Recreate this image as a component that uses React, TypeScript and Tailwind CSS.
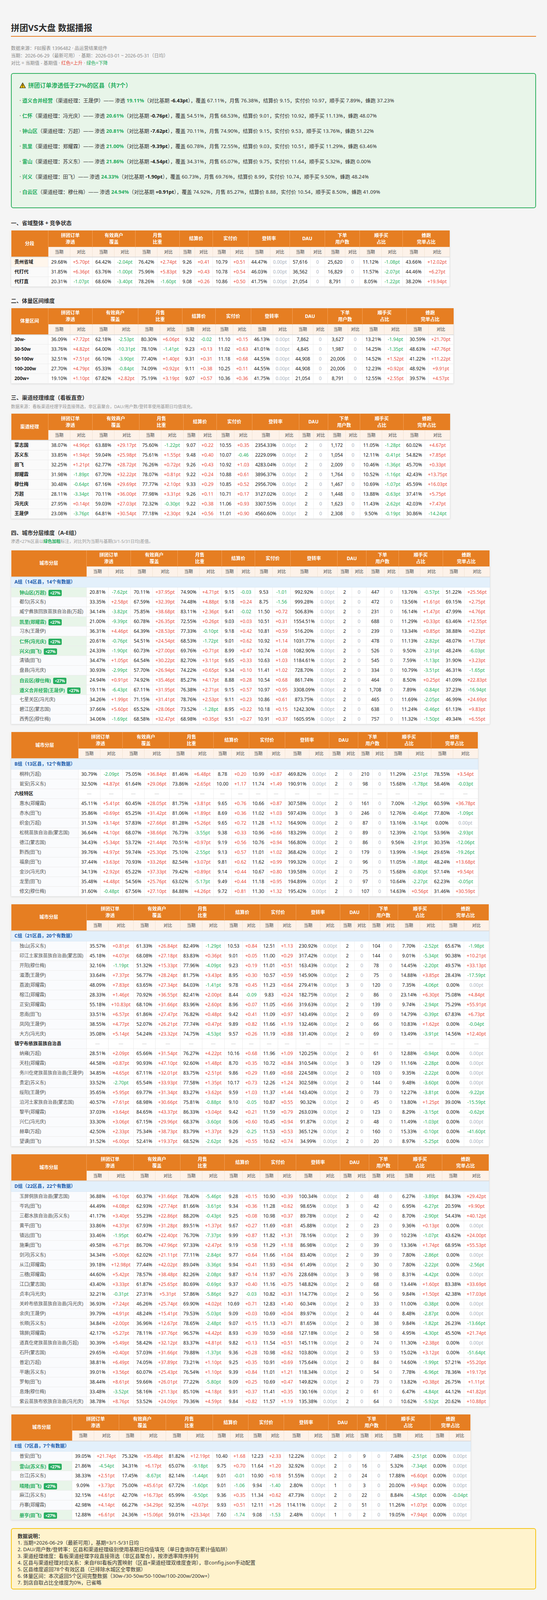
import React from 'react';

const GROUPS: string[][] = [
  ['拼团订单', '渗透'],
  ['有效商户', '覆盖'],
  ['月售', '比重'],
  ['结算价'],
  ['实付价'],
  ['登转率'],
  ['DAU'],
  ['下单', '用户数'],
  ['顺手买', '占比'],
  ['蜂跑', '完单占比'],
];

type Row = { name: string; hl: boolean; vals: string[] };

function parse(src: string): Row[] {
  return src
    .trim()
    .split('\n')
    .map((line) => {
      const parts = line.trim().split(/\s+/);
      const raw = parts[0];
      return { name: raw.replace(/^!/, ''), hl: raw.startsWith('!'), vals: parts.slice(1) };
    });
}

const PROVINCE = parse(`
贵州省域 29.68% +5.70pt 64.42% -2.04pt 76.42% +2.74pt 9.26 +0.41 10.79 +0.51 44.47% 0.00pt 57,616 0 25,620 0 11.12% -1.08pt 43.66% +12.02pt
代打代 31.85% +6.36pt 63.76% -1.00pt 75.96% +5.83pt 9.29 +0.43 10.78 +0.54 46.03% 0.00pt 36,562 0 16,829 0 11.57% -2.07pt 44.46% +6.27pt
代打直 20.31% -1.07pt 68.60% -3.40pt 78.26% -1.60pt 9.08 +0.26 10.86 +0.50 41.75% 0.00pt 21,054 0 8,791 0 8.05% -1.22pt 38.20% +19.94pt
`);

const VOLUME = parse(`
30w- 36.09% +7.72pt 62.18% -2.53pt 80.30% +6.06pt 9.32 -0.02 11.10 +0.15 46.13% 0.00pt 7,862 0 3,627 0 13.21% -1.94pt 30.59% +21.70pt
30-50w 33.76% +4.82pt 64.00% -10.31pt 78.10% -1.41pt 9.23 +0.13 11.02 +0.63 41.01% 0.00pt 4,845 0 1,987 0 14.25% -1.35pt 48.63% +47.76pt
50-100w 32.51% +7.51pt 66.10% -3.90pt 77.40% +1.40pt 9.31 +0.31 11.18 +0.68 44.55% 0.00pt 44,908 0 20,006 0 14.52% +1.52pt 41.22% +11.22pt
100-200w 27.70% +4.79pt 65.33% -0.84pt 74.09% +0.92pt 9.11 +0.38 10.25 +0.11 44.55% 0.00pt 44,908 0 20,006 0 12.23% +0.92pt 48.92% +9.91pt
200w+ 19.10% +1.10pt 67.82% +2.82pt 75.19% +3.19pt 9.07 +0.57 10.36 +0.36 41.75% 0.00pt 21,054 0 8,791 0 12.55% +2.55pt 39.57% +4.57pt
`);

const MANAGERS = parse(`
蒙志国 38.07% +4.96pt 63.88% +29.17pt 75.60% -1.22pt 9.07 +0.22 10.55 +0.35 2354.33% 0.00pt 2 0 1,172 0 11.05% -1.28pt 60.02% +4.67pt
苏义东 33.85% +1.94pt 59.04% +25.98pt 75.61% +1.55pt 9.48 +0.40 10.07 -0.46 2229.09% 0.00pt 2 0 1,054 0 12.11% -0.41pt 54.82% +7.85pt
田飞 32.25% +1.21pt 62.77% +28.72pt 76.26% +0.72pt 9.26 +0.43 10.92 +1.03 4283.04% 0.00pt 2 0 2,009 0 10.46% -1.36pt 45.70% +0.33pt
郑耀霖 31.98% -1.89pt 67.70% +32.22pt 78.07% +0.81pt 9.22 +0.24 10.88 +0.61 3896.37% 0.00pt 2 0 1,764 0 10.52% -1.16pt 42.43% +13.75pt
穆仕梅 30.48% -0.64pt 67.16% +29.69pt 77.77% +2.10pt 9.33 +0.29 10.85 +0.52 2956.70% 0.00pt 2 0 1,467 0 10.69% -1.07pt 45.59% +16.03pt
万超 28.11% -3.34pt 70.11% +36.00pt 77.98% +3.31pt 9.26 +0.11 10.71 +0.17 3127.02% 0.00pt 2 0 1,448 0 13.88% -0.63pt 37.41% +5.75pt
冯光庆 27.95% +0.14pt 59.03% +27.03pt 72.32% -0.30pt 9.22 +0.38 11.06 +0.93 3307.55% 0.00pt 2 0 1,623 0 11.43% -2.62pt 42.03% +7.47pt
王晟伊 23.08% -3.76pt 64.81% +30.54pt 77.18% +2.30pt 9.24 +0.56 11.01 +0.90 4560.60% 0.00pt 2 0 2,308 0 9.50% -0.19pt 30.86% -14.24pt
`);

const GROUP_A = parse(`
!钟山区(万超) 20.81% -7.62pt 70.11% +37.95pt 74.90% +4.71pt 9.15 -0.03 9.53 -1.01 992.92% 0.00pt 2 0 447 0 13.76% -0.57pt 51.22% +25.56pt
都匀(苏义东) 33.35% +2.58pt 67.59% +32.39pt 74.48% +4.88pt 9.18 +0.24 8.75 -1.56 999.28% 0.00pt 2 0 472 0 13.56% +1.61pt 69.15% +2.75pt
威宁彝族回族苗族自治县(万超) 34.14% -3.82pt 75.85% +38.68pt 83.11% +2.36pt 9.41 -0.02 11.50 +0.72 506.83% 0.00pt 2 0 231 0 16.14% +1.47pt 47.99% +4.76pt
!凯里(郑耀霖) 21.00% -9.39pt 60.78% +26.35pt 72.55% +0.26pt 9.03 +0.03 10.51 +0.31 1554.51% 0.00pt 2 0 688 0 11.29% +0.33pt 63.46% +12.55pt
习水(王晟伊) 36.31% +4.46pt 64.39% +28.53pt 77.33% -0.10pt 9.18 +0.42 10.81 +0.59 516.20% 0.00pt 2 0 239 0 13.34% +0.85pt 38.88% +0.23pt
!仁怀(冯光庆) 20.61% -0.76pt 54.51% +24.54pt 68.53% -1.72pt 9.01 +0.62 10.92 +1.14 1031.77% 0.00pt 2 0 478 0 11.13% -2.82pt 48.07% +1.73pt
!兴义(田飞) 24.33% -1.90pt 60.73% +27.00pt 69.76% +0.71pt 8.99 +0.47 10.74 +1.08 1082.90% 0.00pt 2 0 526 0 9.50% -2.31pt 48.24% -6.03pt
清镇(田飞) 34.47% +1.05pt 64.54% +30.22pt 82.70% +3.11pt 9.65 +0.33 10.63 +1.03 1184.61% 0.00pt 2 0 545 0 7.59% -1.13pt 31.90% +3.23pt
盘县(冯光庆) 30.93% -2.99pt 57.70% +26.94pt 74.22% +0.65pt 9.34 +0.10 11.41 +1.02 728.70% 0.00pt 2 0 334 0 10.79% -3.51pt 46.31% -1.65pt
!白云区(穆仕梅) 24.94% +0.91pt 74.92% +35.46pt 85.27% +4.17pt 8.88 +0.28 10.54 +0.68 861.74% 0.00pt 2 0 464 0 8.50% +0.25pt 41.09% +22.83pt
!遵义合并经营(王晟伊) 19.11% -6.43pt 67.11% +31.95pt 76.38% +2.71pt 9.15 +0.57 10.97 +0.95 3308.09% 0.00pt 2 0 1,708 0 7.89% -0.84pt 37.23% -16.94pt
七星关区(冯光庆) 34.26% +1.99pt 71.15% +31.41pt 78.76% +2.53pt 9.11 +0.23 10.86 +0.61 873.75% 0.00pt 2 0 465 0 11.69% -2.05pt 46.99% +24.69pt
碧江区(蒙志国) 37.66% +5.60pt 65.52% +28.06pt 73.52% -1.28pt 8.95 +0.22 10.18 +0.15 1242.30% 0.00pt 2 0 638 0 11.24% -0.46pt 61.13% +9.83pt
西秀区(穆仕梅) 34.06% -1.69pt 68.58% +32.47pt 68.98% +0.35pt 9.51 +0.27 10.91 +0.37 1605.95% 0.00pt 2 0 757 0 11.32% -1.50pt 49.34% +6.55pt
`);

const GROUP_B = parse(`
桐梓(万超) 30.79% -2.09pt 75.05% +36.84pt 81.46% +6.48pt 8.78 +0.20 10.99 +0.87 469.82% 0.00pt 2 0 210 0 11.29% -2.51pt 78.55% +3.54pt
瓮安(苏义东) 32.50% +4.87pt 61.64% +29.06pt 73.86% +2.65pt 10.00 +1.17 11.74 +1.49 190.91% 0.00pt 2 0 98 0 15.68% -1.78pt 58.46% -0.03pt
六枝特区
惠水(郑耀霖) 45.11% +5.41pt 60.45% +28.05pt 81.75% +3.81pt 9.65 +0.76 10.66 +0.87 307.58% 0.00pt 2 0 161 0 7.00% -1.29pt 60.59% +36.78pt
赤水(田飞) 35.86% +0.69pt 65.25% +31.42pt 81.06% +1.89pt 8.69 +0.36 11.02 +1.03 597.43% 0.00pt 3 0 246 0 12.76% -0.46pt 77.80% -1.09pt
织金(万超) 31.53% +3.14pt 57.83% +27.66pt 81.28% +5.26pt 9.65 +0.72 11.28 +1.12 164.90% 0.00pt 2 0 87 0 13.16% -3.14pt 0.00% 0.00pt
松桃苗族自治县(蒙志国) 36.64% +4.10pt 68.07% +38.66pt 76.73% -3.55pt 9.38 +0.33 10.96 +0.66 183.29% 0.00pt 2 0 89 0 12.39% -2.10pt 53.96% -2.93pt
德江(蒙志国) 34.43% +5.34pt 53.72% +21.44pt 70.51% +0.97pt 9.19 +0.56 10.76 +0.94 166.80% 0.00pt 2 0 86 0 9.56% -2.91pt 30.35% -12.06pt
黔西(田飞) 39.76% +4.97pt 59.74% +25.30pt 75.10% -2.55pt 9.13 +0.57 11.01 +1.02 368.42% 0.00pt 2 0 179 0 13.99% -1.94pt 29.65% -19.26pt
福泉(田飞) 37.44% +3.63pt 70.93% +33.26pt 82.54% +3.07pt 9.81 +0.62 11.62 +0.99 199.32% 0.00pt 2 0 96 0 11.05% -1.88pt 48.24% +13.68pt
金沙(冯光庆) 34.13% +2.92pt 65.22% +37.33pt 79.42% +0.89pt 9.14 +0.44 10.67 +0.80 139.58% 0.00pt 2 0 75 0 15.68% -0.80pt 57.14% +9.54pt
龙里(田飞) 35.48% +4.48pt 54.56% +25.76pt 63.02% -5.17pt 9.49 +0.44 11.18 +0.95 194.89% 0.00pt 2 0 97 0 10.64% -2.27pt 62.23% -0.05pt
修文(穆仕梅) 31.60% -0.48pt 67.56% +27.10pt 84.88% +4.26pt 9.72 +0.81 11.30 +1.32 195.42% 0.00pt 2 0 107 0 14.63% +0.56pt 31.46% +30.59pt
`);

const GROUP_C = parse(`
独山(苏义东) 35.57% +0.81pt 61.33% +26.84pt 82.49% -1.29pt 10.53 +0.84 12.51 +1.13 230.92% 0.00pt 2 0 104 0 7.70% -2.52pt 65.67% -1.98pt
印江土家族苗族自治县(蒙志国) 45.18% +4.07pt 68.08% +27.18pt 83.83% +0.36pt 9.01 +0.05 11.00 +0.29 317.42% 0.00pt 2 0 144 0 9.01% -5.34pt 90.38% +10.21pt
开阳(穆仕梅) 32.16% -1.19pt 51.32% +15.33pt 77.96% -4.09pt 9.23 +0.19 11.01 +0.51 163.43% 0.00pt 2 0 78 0 14.45% -2.20pt 49.57% +33.13pt
湄潭(王晟伊) 33.64% +7.37pt 56.77% +28.24pt 81.75% +3.43pt 8.95 +0.30 10.57 +0.59 145.90% 0.00pt 2 0 75 0 14.88% +3.85pt 28.43% -17.59pt
荔波(郑耀霖) 48.09% +7.83pt 63.65% +27.34pt 84.03% -1.41pt 9.78 +0.45 11.23 +0.64 279.41% 0.00pt 3 0 120 0 7.35% -4.06pt 0.00% 0.00pt
榕江(郑耀霖) 28.33% +1.46pt 70.92% +36.55pt 82.41% +2.00pt 8.44 -0.09 9.83 +0.24 182.75% 0.00pt 2 0 86 0 23.14% +6.30pt 75.08% +4.84pt
正安(郑耀霖) 55.18% +10.83pt 68.10% +31.66pt 83.96% +2.60pt 8.96 +0.07 11.05 +0.66 319.63% 0.00pt 2 0 139 0 9.74% -2.94pt 75.29% +55.91pt
思南(田飞) 33.51% +6.57pt 61.86% +27.47pt 76.82% +0.48pt 9.42 +0.41 11.09 +0.97 143.49% 0.00pt 2 0 69 0 14.79% -0.39pt 67.83% +6.73pt
凤冈(王晟伊) 38.55% +4.77pt 52.07% +26.21pt 77.74% +0.47pt 9.89 +0.82 11.66 +1.19 132.46% 0.00pt 2 0 66 0 10.83% +1.62pt 0.00% -0.04pt
大方(冯光庆) 35.08% +5.14pt 54.24% +23.32pt 74.75% -4.53pt 9.57 +0.26 11.19 +0.88 131.40% 0.00pt 2 0 69 0 13.49% -3.91pt 14.56% +12.40pt
镇宁布依族苗族自治县
纳雍(万超) 28.51% +2.09pt 65.66% +31.54pt 76.27% +4.22pt 10.16 +0.68 11.96 +1.09 120.25% 0.00pt 2 0 61 0 12.88% -0.94pt 0.00% 0.00pt
天柱(郑耀霖) 44.58% +0.87pt 90.93% +47.10pt 92.60% +1.48pt 8.70 +0.35 10.72 +0.84 310.54% 0.00pt 3 0 129 0 11.16% -2.28pt 0.00% 0.00pt
务川仡佬族苗族自治县(王晟伊) 34.85% +4.65pt 67.11% +32.01pt 83.75% +2.51pt 9.86 +0.29 11.69 +0.68 224.58% 0.00pt 2 0 103 0 9.35% -2.22pt 0.00% 0.00pt
贵定(苏义东) 33.52% -2.70pt 65.54% +33.93pt 77.58% +1.35pt 10.17 +0.73 12.26 +1.24 302.58% 0.00pt 2 0 144 0 9.48% -3.60pt 0.00% 0.00pt
绥阳(王晟伊) 35.65% +5.95pt 69.77% +31.34pt 83.27% +3.62pt 9.59 +1.03 11.37 +1.44 143.40% 0.00pt 2 0 73 0 12.27% -3.81pt 0.00% -9.22pt
沿河土家族自治县(蒙志国) 40.57% +7.61pt 68.98% +30.66pt 75.81% -0.88pt 9.10 -0.05 10.87 +0.55 90.32% 0.00pt 2 0 45 0 13.80% +1.25pt 39.00% -15.59pt
黎平(郑耀霖) 37.03% +3.64pt 84.65% +43.37pt 86.33% +3.04pt 9.42 +0.21 11.59 +0.79 263.03% 0.00pt 2 0 123 0 8.29% -3.15pt 0.00% -0.62pt
兴仁(冯光庆) 33.30% +3.06pt 67.15% +29.96pt 68.37% -3.60pt 9.06 +0.60 10.45 +0.94 91.87% 0.00pt 2 0 48 0 11.49% -1.03pt 0.00% 0.00pt
赫章(万超) 42.50% +2.33pt 75.34% +38.73pt 83.79% +1.37pt 9.29 -0.25 11.53 +0.53 365.12% 0.00pt 2 0 160 0 15.33% -0.10pt 0.00% -41.60pt
望谟(田飞) 31.52% +6.00pt 52.41% +19.37pt 68.52% -2.62pt 9.26 +0.55 10.62 +0.74 34.99% 0.00pt 2 0 20 0 8.97% -5.25pt 0.00% 0.00pt
`);

const GROUP_D = parse(`
玉屏侗族自治县(蒙志国) 36.88% +6.10pt 60.37% +31.66pt 78.40% -5.46pt 9.28 +0.15 10.90 +0.39 100.34% 0.00pt 2 0 48 0 6.27% -3.89pt 84.33% +29.42pt
岑巩(田飞) 44.49% +4.08pt 62.93% +27.74pt 81.66% -3.61pt 9.34 +0.36 11.28 +0.62 98.65% 0.00pt 3 0 42 0 6.95% -6.27pt 20.59% +9.90pt
三都水族自治县(苏义东) 41.17% +3.40pt 55.23% +22.86pt 88.20% -0.43pt 9.25 +0.08 10.98 +0.37 89.78% 0.00pt 2 0 42 0 8.70% -2.90pt 54.43% +40.12pt
黄平(田飞) 33.86% +4.37pt 67.93% +31.28pt 89.51% +1.37pt 9.67 +0.27 11.69 +0.81 45.88% 0.00pt 2 0 23 0 9.36% +0.13pt 0.00% 0.00pt
镇远(田飞) 33.46% -1.95pt 60.47% +22.40pt 76.70% -7.37pt 9.99 +0.87 11.82 +1.31 78.16% 0.00pt 2 0 39 0 10.23% -1.07pt 43.62% +24.00pt
施秉(田飞) 49.58% +6.71pt 86.70% +47.96pt 97.33% +2.47pt 9.19 +0.58 11.29 +1.18 86.98% 0.00pt 2 0 39 0 13.36% +1.74pt 68.95% +55.53pt
剑河(苏义东) 34.34% +5.00pt 62.02% +21.11pt 77.11% -2.84pt 9.77 +0.64 11.66 +1.04 83.40% 0.00pt 2 0 39 0 7.80% -2.86pt 0.00% 0.00pt
从江(郑耀霖) 39.18% +12.98pt 77.44% +42.02pt 89.04% -3.36pt 9.94 +0.41 11.93 +0.94 61.49% 0.00pt 2 0 30 0 7.80% -2.22pt 0.00% -2.56pt
三穗(郑耀霖) 44.60% +5.42pt 78.57% +38.48pt 82.26% -2.08pt 9.87 +0.14 11.97 +0.76 228.68% 0.00pt 3 0 98 0 8.31% -4.42pt 0.00% 0.00pt
江口(蒙志国) 43.40% +3.33pt 61.87% +25.65pt 80.69% -0.69pt 9.37 +0.40 11.16 +0.75 148.82% 0.00pt 2 0 68 0 13.44% +1.60pt 83.38% +33.69pt
贞丰(冯光庆) 32.21% -0.31pt 27.31% +5.31pt 57.86% -5.86pt 9.27 -0.03 10.82 +0.31 114.77% 0.00pt 2 0 56 0 9.84% +1.50pt 42.38% +17.03pt
关岭布依族苗族自治县(冯光庆) 36.93% +7.24pt 46.26% +25.74pt 69.90% +4.02pt 10.69 +0.71 12.83 +1.40 60.34% 0.00pt 2 0 33 0 11.00% -0.38pt 0.00% 0.00pt
余庆(王晟伊) 39.79% +4.91pt 48.24% +15.41pt 79.53% -5.03pt 9.09 +0.03 10.69 +0.04 89.97% 0.00pt 2 0 44 0 8.48% -2.87pt 0.00% 0.00pt
长顺(苏义东) 34.84% +2.00pt 36.96% +12.67pt 78.65% -2.48pt 9.07 +0.15 11.13 +0.71 81.65% 0.00pt 2 0 38 0 9.84% -1.82pt 26.23% -13.66pt
锦屏(郑耀霖) 42.17% +5.27pt 78.11% +37.76pt 96.57% +4.42pt 8.93 +0.39 10.59 +0.68 127.18% 0.00pt 2 0 58 0 4.95% -4.30pt 45.50% +21.74pt
道真仡佬族苗族自治县(万超) 30.39% +5.49pt 58.42% +32.12pt 83.37% +4.81pt 9.82 +0.13 11.54 +0.51 145.11% 0.00pt 2 0 74 0 11.30% +2.38pt 0.00% 0.00pt
石阡(蒙志国) 29.65% +0.40pt 57.03% +31.66pt 79.88% -1.37pt 9.36 +0.28 10.98 +0.62 103.80% 0.00pt 2 0 53 0 15.02% +3.12pt 0.00% -51.64pt
普定(万超) 38.81% +6.49pt 74.05% +37.89pt 73.21% +1.10pt 9.25 +0.35 10.91 +0.69 175.64% 0.00pt 2 0 84 0 14.60% -1.99pt 57.21% +55.20pt
平塘(苏义东) 39.01% +3.56pt 60.07% +25.43pt 76.54% +1.10pt 9.39 +0.84 11.01 +1.21 118.34% 0.00pt 2 0 54 0 7.78% -6.96pt 78.36% +19.17pt
罗甸(田飞) 38.44% +8.61pt 59.66% +26.01pt 77.22% -5.80pt 9.09 +0.25 10.69 +0.47 149.82% 0.00pt 2 0 73 0 13.82% +0.38pt 26.75% +1.11pt
息烽(穆仕梅) 33.48% -3.52pt 58.16% +21.13pt 85.10% +4.18pt 9.91 +0.37 11.41 +0.35 130.16% 0.00pt 2 0 61 0 6.47% -4.84pt 44.12% +41.82pt
紫云苗族布依族自治县(冯光庆) 38.78% +8.76pt 53.52% +24.09pt 79.36% +4.59pt 9.84 +0.82 11.57 +1.19 135.38% 0.00pt 2 0 64 0 10.62% -5.92pt 20.62% +10.88pt
`);

const GROUP_E = parse(`
普安(田飞) 39.05% +21.74pt 75.32% +35.48pt 81.82% +12.19pt 10.40 +1.68 12.23 +2.33 12.22% 0.00pt 2 0 9 0 7.48% -2.51pt 0.00% 0.00pt
!雷山(苏义东) 21.86% -4.54pt 34.31% +6.17pt 65.07% -9.18pt 9.75 +0.70 11.64 +1.20 32.92% 0.00pt 2 0 16 0 5.32% -7.34pt 0.00% 0.00pt
台江(苏义东) 38.33% +2.51pt 17.45% -8.67pt 82.14% -1.44pt 9.01 -0.01 10.90 +0.18 51.55% 0.00pt 2 0 24 0 17.88% +6.60pt 0.00% 0.00pt
!晴隆(田飞) 9.09% +3.73pt 75.00% +45.61pt 67.72% -1.60pt 9.01 -1.06 9.94 -1.40 2.80% 0.00pt 1 0 3 0 20.00% +9.94pt 0.00% 0.00pt
麻江(苏义东) 32.15% +4.61pt 42.70% +16.73pt 65.99% -9.50pt 9.36 +0.35 11.34 +0.62 47.73% 0.00pt 2 0 22 0 8.84% -4.58pt 0.00% -0.04pt
丹寨(郑耀霖) 42.98% +4.14pt 66.27% +34.29pt 92.35% +4.07pt 9.93 +0.51 12.11 +1.26 114.11% 0.00pt 2 0 51 0 11.26% +1.07pt 0.00% 0.00pt
!册亨(田飞) 12.88% +6.61pt 24.36% +15.06pt 59.01% +23.34pt 7.60 -1.74 9.08 -1.53 2.48% 0.00pt 1 0 2 0 19.05% +7.94pt 0.00% 0.00pt
`);

const CITY_TABLES = [
  { title: 'A组（14区县，14个有数据）', rows: GROUP_A, firstW: 'w-[193px]' },
  { title: 'B组（13区县，12个有数据）', rows: GROUP_B, firstW: 'w-[172px]' },
  { title: 'C组（21区县，20个有数据）', rows: GROUP_C, firstW: 'w-[193px]' },
  { title: 'D组（22区县，22个有数据）', rows: GROUP_D, firstW: 'w-[193px]' },
  { title: 'E组（7区县，7个有数据）', rows: GROUP_E, firstW: 'w-[156px]' },
];

const ALERTS = [
  ['遵义合并经营', '王晟伊', '19.11%', '-6.43pt', '67.11%', '76.38%', '9.15', '10.97', '7.89%', '37.23%'],
  ['仁怀', '冯光庆', '20.61%', '-0.76pt', '54.51%', '68.53%', '9.01', '10.92', '11.13%', '48.07%'],
  ['钟山区', '万超', '20.81%', '-7.62pt', '70.11%', '74.90%', '9.15', '9.53', '13.76%', '51.22%'],
  ['凯里', '郑耀霖', '21.00%', '-9.39pt', '60.78%', '72.55%', '9.03', '10.51', '11.29%', '63.46%'],
  ['雷山', '苏义东', '21.86%', '-4.54pt', '34.31%', '65.07%', '9.75', '11.64', '5.32%', '0.00%'],
  ['兴义', '田飞', '24.33%', '-1.90pt', '60.73%', '69.76%', '8.99', '10.74', '9.50%', '48.24%'],
  ['白云区', '穆仕梅', '24.94%', '+0.91pt', '74.92%', '85.27%', '8.88', '10.54', '8.50%', '41.09%'],
];

const NOTES = [
  '1. 当期=2026-06-29（最新可用），基期=3/1-5/31日均',
  '2. DAU/用户数/登转率：区县和渠道经理级别使用基期日均值填充（单日查询存在累计值陷阱）',
  '3. 渠道经理维度：看板渠道经理字段直接筛选（非区县聚合），按渗透率降序排列',
  '4. 区县与渠道经理对应关系：来自FBI看板内置映射（区县+渠道经理双维度查询），非config.json手动配置',
  '5. 区县维度返回78个有效区县（已排除水城区全零数据）',
  '6. 体量区间：本次返回5个区间完整数据（30w-/30-50w/50-100w/100-200w/200w+）',
  '7. 到店自取占比全维度为0%，已省略',
];

const CELL = 'h-[25px] whitespace-nowrap border border-[#ececec] px-[7px] py-0 text-center text-[12px] leading-[16px]';

function diffTone(v: string) {
  if (v.startsWith('+')) return 'text-[#e74c3c]';
  if (v.startsWith('-')) return 'text-[#27ae60]';
  return 'text-[#a7afba]';
}

function ValueCells({ vals }: { vals: string[] }) {
  if (vals.length === 0) {
    return (
      <>
        {Array.from({ length: 20 }).map((_, i) => (
          <td key={i} className={`${CELL} text-[#c4c4c4]`}>
            —
          </td>
        ))}
      </>
    );
  }
  return (
    <>
      {vals.map((v, i) => (
        <td key={i} className={`${CELL} ${i % 2 === 0 ? 'text-[#222]' : diffTone(v)}`}>
          {v}
        </td>
      ))}
    </>
  );
}

function Head({ label, firstW }: { label: string; firstW: string }) {
  return (
    <thead>
      <tr>
        <th
          rowSpan={2}
          className={`${firstW} border-b-2 border-r border-b-[#dcdcdc] border-r-[#f2a25c] bg-[#e67e22] text-[12px] font-bold text-white`}
        >
          {label}
        </th>
        {GROUPS.map((g) => (
          <th
            key={g[0]}
            colSpan={2}
            className="h-[42px] border-l border-[#f2a25c] bg-[#e67e22] px-[6px] text-[12px] font-bold leading-[17px] text-white"
          >
            {g.map((t) => (
              <div key={t}>{t}</div>
            ))}
          </th>
        ))}
      </tr>
      <tr>
        {GROUPS.flatMap((g) =>
          ['当期', '对比'].map((t) => (
            <th
              key={g[0] + t}
              className="h-[26px] border border-b-2 border-[#f1e2d3] border-b-[#dcdcdc] bg-[#fdf2e9] px-[7px] text-[11px] font-medium text-[#666]"
            >
              {t}
            </th>
          )),
        )}
      </tr>
    </thead>
  );
}

function PlainTable({ label, rows, firstTone }: { label: string; rows: Row[]; firstTone?: boolean }) {
  return (
    <table className="mt-[9px] border-collapse bg-white shadow-[0_1px_4px_rgba(0,0,0,0.12)]">
      <Head label={label} firstW="w-[95px]" />
      <tbody>
        {rows.map((r, i) => (
          <tr key={r.name}>
            <td
              className={`h-[25px] border border-[#ececec] px-[8px] text-left text-[12px] font-bold text-[#1f1f1f] ${
                firstTone && i === 0 ? 'bg-[#fff6ec]' : 'bg-[#fafafa]'
              }`}
            >
              {r.name}
            </td>
            <ValueCells vals={r.vals} />
          </tr>
        ))}
      </tbody>
    </table>
  );
}

function CityName({ row }: { row: Row }) {
  if (row.vals.length === 0) {
    return (
      <td className="h-[25px] whitespace-nowrap border border-[#ececec] bg-[#fafbfd] px-[8px] text-left text-[12px] font-bold text-[#1f1f1f]">
        {row.name}
      </td>
    );
  }
  if (row.hl) {
    return (
      <td className="h-[25px] whitespace-nowrap border border-[#ececec] bg-[#e8f5e9] pl-[21px] pr-[8px] text-left">
        <span className="inline-flex items-center gap-[6px] text-[12px] font-bold text-[#27ae60]">
          {row.name}
          <span className="rounded-[3px] bg-[#27ae60] px-[4px] text-[10px] leading-[16px] text-white">&lt;27%</span>
        </span>
      </td>
    );
  }
  return (
    <td className="h-[25px] whitespace-nowrap border border-[#ececec] bg-[#fafbfd] pl-[21px] pr-[8px] text-left text-[12px] text-[#555]">
      {row.name}
    </td>
  );
}

function CityTable({ title, rows, firstW }: { title: string; rows: Row[]; firstW: string }) {
  return (
    <table className="mt-[20px] border-collapse bg-white shadow-[0_1px_4px_rgba(0,0,0,0.12)] first:mt-[14px]">
      <Head label="城市分层" firstW={firstW} />
      <tbody>
        <tr>
          <td
            colSpan={21}
            className="h-[27px] border border-[#d9e8f6] bg-[#e3f0fb] px-[8px] text-left text-[12px] font-bold text-[#1f5fae]"
          >
            {title}
          </td>
        </tr>
        {rows.map((r) => (
          <tr key={r.name}>
            <CityName row={r} />
            <ValueCells vals={r.vals} />
          </tr>
        ))}
      </tbody>
    </table>
  );
}

function WarnIcon() {
  return (
    <svg width="16" height="15" viewBox="0 0 16 15" className="shrink-0">
      <path d="M8 1 L15.2 14 H0.8 Z" fill="#f7c600" stroke="#1a1a1a" strokeWidth="1.2" strokeLinejoin="round" />
      <rect x="7.2" y="5" width="1.6" height="5.2" rx="0.6" fill="#1a1a1a" />
      <circle cx="8" cy="11.9" r="0.95" fill="#1a1a1a" />
    </svg>
  );
}

function SectionTitle({ children, className = '' }: { children: React.ReactNode; className?: string }) {
  return <h2 className={`text-[14px] font-bold leading-[20px] text-[#333] ${className}`}>{children}</h2>;
}

export default function App() {
  return (
    <div className="min-h-screen bg-[#f5f5f5] font-[family-name:'Noto_Sans','Noto_Sans_CJK_SC',sans-serif] text-[#333]">
      <div className="px-[28px] pb-[39px] pt-[54px]">
        <h1 className="border-b-2 border-[#e67e22] pb-[6px] text-[22px] font-bold leading-[32px] text-[#2c2c2c]">
          拼团VS大盘 数据播报
        </h1>

        <div className="mt-[20px] text-[12px] leading-[19px] text-[#8a8a8a]">
          <div>数据来源：FBI报表 1396482 · 品运营结果组件</div>
          <div>当期：2026-06-29（最新可用） · 基期：2026-03-01 ~ 2026-05-31（日均）</div>
          <div>
            对比 = 当期值 - 基期值 · <span className="text-[#e74c3c]">红色=上升</span> ·{' '}
            <span className="text-[#27ae60]">绿色=下降</span>
          </div>
        </div>

        <div className="mt-[16px] rounded-[6px] border-2 border-[#2fb060] bg-[#e8f5e9] px-[20px] pb-[20px] pt-[17px]">
          <div className="mb-[8px] flex items-center gap-[6px] text-[15px] font-bold leading-[24px] text-[#27ae60]">
            <WarnIcon />
            拼团订单渗透低于27%的区县（共7个）
          </div>
          {ALERTS.map(([name, mgr, pen, diff, cov, sale, settle, pay, shun, feng]) => (
            <div key={name} className="py-[8px] text-[13px] leading-[23px] text-[#333]">
              · <b className="text-[#27ae60]">{name}</b>（渠道经理：{mgr}）—— 渗透{' '}
              <b className="text-[#27ae60]">{pen}</b>（对比基期 <b className="text-[#222]">{diff}</b>），覆盖 {cov}，月售 {sale}，结算价 {settle}，实付价 {pay}，顺手买 {shun}，蜂跑 {feng}
            </div>
          ))}
        </div>

        <SectionTitle className="mt-[28px]">一、省域整体 + 竞争状态</SectionTitle>
        <PlainTable label="分段" rows={PROVINCE} firstTone />

        <SectionTitle className="mt-[26px]">二、体量区间维度</SectionTitle>
        <PlainTable label="体量区间" rows={VOLUME} />

        <SectionTitle className="mt-[26px]">三、渠道经理维度（看板直查）</SectionTitle>
        <p className="mt-[4px] text-[11px] leading-[18px] text-[#999]">
          数据来源：看板渠道经理字段直接筛选，非区县聚合，DAU/用户数/登转率使用基期日均值填充。
        </p>
        <div className="mt-[4px]">
          <PlainTable label="渠道经理" rows={MANAGERS} />
        </div>

        <SectionTitle className="mt-[26px]">四、城市分层维度（A-E组）</SectionTitle>
        <p className="mt-[3px] text-[11px] leading-[18px] text-[#999]">
          渗透&lt;27%区县以<b className="text-[#27ae60]">绿色加粗</b>标注，对比列为当期与基期(3/1-5/31日均)差值。
        </p>
        <div className="flex flex-col items-start">
          {CITY_TABLES.map((t) => (
            <CityTable key={t.title} title={t.title} rows={t.rows} firstW={t.firstW} />
          ))}
        </div>

        <div className="mt-[21px] rounded-[6px] border-2 border-[#f5c518] bg-[#fff3cd] px-[15px] pb-[7px] pt-[10px] text-[13px] leading-[17px] text-[#333]">
          <div className="font-bold">数据说明：</div>
          {NOTES.map((n) => (
            <div key={n}>{n}</div>
          ))}
        </div>
      </div>
    </div>
  );
}
